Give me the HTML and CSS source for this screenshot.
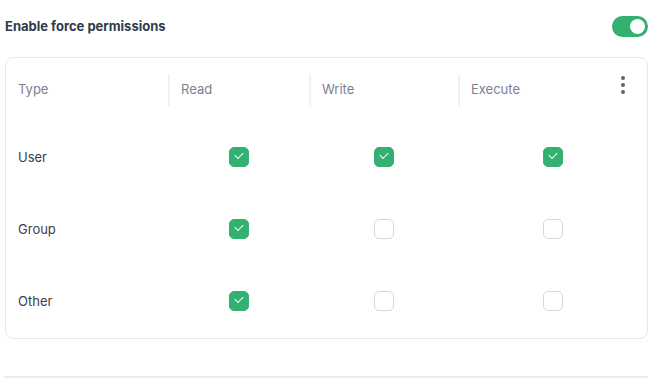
FILE: index.html
```html
<!DOCTYPE html>
<html lang="en">
<head>
  <meta charset="UTF-8">
  <title>Force permissions</title>
  <link rel="stylesheet" href="styles.css">
</head>
<body>
  <div class="panel">
    <div class="panel-head">
      <span class="title">Enable force permissions</span>
      <span class="toggle on"><span class="knob"></span></span>
    </div>

    <div class="perm-card">
      <div class="perm-row header">
        <div class="cell"><span class="th">Type</span></div>
        <div class="cell sep"><span class="th">Read</span></div>
        <div class="cell sep"><span class="th">Write</span></div>
        <div class="cell sep last">
          <span class="th">Execute</span>
          <span class="kebab"><i></i><i></i><i></i></span>
        </div>
      </div>

      <div class="perm-row">
        <div class="cell label">User</div>
        <div class="cell center"><span class="cb checked"></span></div>
        <div class="cell center"><span class="cb checked"></span></div>
        <div class="cell center"><span class="cb checked"></span></div>
      </div>
      <div class="perm-row">
        <div class="cell label">Group</div>
        <div class="cell center"><span class="cb checked"></span></div>
        <div class="cell center"><span class="cb"></span></div>
        <div class="cell center"><span class="cb"></span></div>
      </div>
      <div class="perm-row">
        <div class="cell label">Other</div>
        <div class="cell center"><span class="cb checked"></span></div>
        <div class="cell center"><span class="cb"></span></div>
        <div class="cell center"><span class="cb"></span></div>
      </div>
    </div>

    <div class="divider"></div>
  </div>
</body>
</html>
```
FILE: styles.css
```css
body {
  margin: 0;
  padding: 0;
  background-color: #fff;
  font-family: Inter, "Noto Sans", sans-serif;
  color: #3b4050;
}
.panel {
  padding: 0 6px 0 5px;
}
.panel-head {
  height: 52px;
  display: flex;
  justify-content: space-between;
  align-items: center;
}
.title {
  font-size: 13px;
  font-weight: 700;
  color: #2f3a4c;
}
.toggle {
  width: 36px;
  height: 21px;
  border-radius: 11px;
  background-color: #34b170;
  position: relative;
}
.toggle .knob {
  position: absolute;
  top: 3px;
  right: 3px;
  width: 15px;
  height: 15px;
  border-radius: 50%;
  background: #fff;
}
.perm-card {
  margin-top: 5px;
  border: 1px solid #e8e8ec;
  border-radius: 8px;
  padding-bottom: 1px;
}
.perm-row {
  display: grid;
  grid-template-columns: 162px 141px 149px 1fr;
  height: 72px;
  align-items: center;
}
.perm-row.header {
  height: 63px;
  align-items: start;
  padding-top: 16px;
  box-sizing: border-box;
}
.header .cell {
  height: 32px;
  display: flex;
  align-items: center;
  padding-left: 12px;
  position: relative;
}
.header .cell.sep {
  border-left: 2px solid #f1f1f3;
  padding-left: 11px;
}
.th {
  font-size: 13px;
  color: #7b8092;
  padding-bottom: 2px;
}
.kebab {
  position: absolute;
  right: 22px;
  top: 2px;
  display: flex;
  flex-direction: column;
  gap: 3px;
}
.kebab i {
  width: 4px;
  height: 4px;
  border-radius: 50%;
  background: #5d6275;
}
.label {
  padding-left: 12px;
  font-size: 13px;
  color: #3b4050;
}
.center {
  display: flex;
  justify-content: center;
}
.cb {
  width: 18px;
  height: 18px;
  border: 1px solid #d4d7df;
  border-radius: 5px;
  background: #fff;
  position: relative;
}
.cb.checked {
  background: #34b170;
  border-color: #34b170;
}
.cb.checked::after {
  content: '';
  position: absolute;
  left: 5.5px;
  top: 4px;
  width: 7px;
  height: 4px;
  border-left: 1.5px solid #fff;
  border-bottom: 1.5px solid #fff;
  transform: rotate(-45deg);
}
.divider {
  margin-top: 37px;
  height: 2px;
  background: #ebebf0;
  margin-left: -1px;
}
```
